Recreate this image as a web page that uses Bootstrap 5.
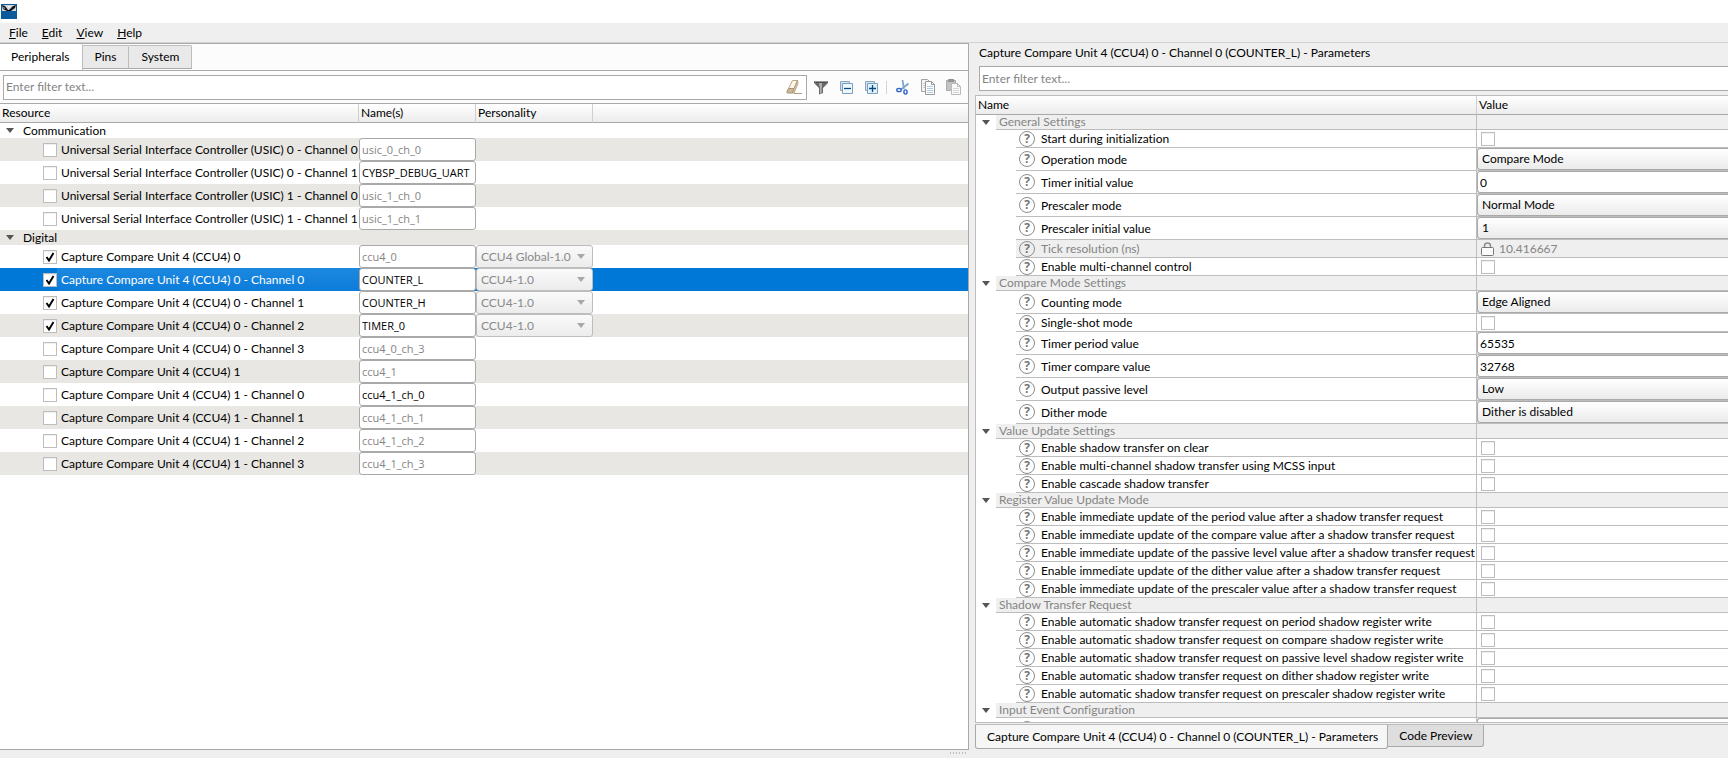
<!DOCTYPE html>
<html lang="en">
<head>
<meta charset="utf-8">
<meta name="viewport" content="width=device-width, initial-scale=1">
<title>Device Configurator</title>
<link href="https://cdn.jsdelivr.net/npm/bootstrap@5.3.0/dist/css/bootstrap.min.css" rel="stylesheet">
<style>
  :root { --line: #bdbdbd; --line-dark: #a9a9a9; --face: #efefef; --stripe: #e8e7e3; --muted: #848484; }
  body { font: 12px/16px Lato, "Open Sans", sans-serif; font-variant-ligatures: none; color: #000; background: var(--face); }
  .title-strip { height: 23px; padding: 3px 1px; }
  .menu-strip { height: 20px; padding: 0 2px; border-bottom: 1px solid #d2d2d2; }
  .menu-strip a { color: #000; text-decoration: none; padding: 0 7px; line-height: 19px; }
  .workspace { display: grid; grid-template-columns: minmax(0, 969fr) minmax(0, 753fr); column-gap: 6px; min-height: 0; }

  .left-pane { border: 1px solid var(--line-dark); border-left: 0; margin-bottom: 8px; }
  .tab-strip { height: 27px; border-bottom: 1px solid var(--line-dark); background: #fcfcfc; }
  .tab-strip button { border: 1px solid var(--line); border-left: 0; border-bottom-color: #aaa; border-radius: 0 2px 0 0; background: #e9e9e9; height: 24px; margin-top: 1px; padding: 0 12px; }
  .tab-strip button.active { height: 26px; margin: 0; padding: 0 12px 0 11px; background: #fff; border-width: 0 1px 0 0; }
  .tool-row { height: 32px; padding: 0 7px 0 3px; background: #fcfcfc; gap: 6px; }
  .tool-icons { gap: 9px; }
  .filter-box { height: 25px; border: 1px solid var(--line-dark); background: #fff; }
  .filter-box input { border: 0; outline: 0; background: transparent; padding: 0 2px; min-width: 0; }
  .filter-box input::placeholder { color: var(--muted); opacity: 1; }
  .icon-btn { border: 0; background: transparent; padding: 0; width: 16px; height: 16px; display: flex; flex: none; }
  .icon-btn svg, .title-strip svg { width: 16px; height: 16px; }
  .tool-sep { width: 1px; height: 13px; margin: 0 -1px 0 -2px; background: #d4d4d4; }

  .tree { table-layout: fixed; width: 100%; border-collapse: separate; border-spacing: 0; }
  .tree td, .tree th { padding: 0; white-space: nowrap; overflow: hidden; font-weight: 400; text-align: left; }
  .tree thead th { height: 19px; line-height: 18px; padding-left: 2px; border-bottom: 1px solid var(--line-dark); border-right: 1px solid #cfcfcf; background: linear-gradient(#fff, #ececec); }
  .tree thead th:last-child { border-right: 0; }
  .cell { display: flex; align-items: center; }
  .caret { width: 0; height: 0; border: 4px solid transparent; border-top: 5px solid #555; border-bottom: 0; flex: none; }
  .tick { appearance: none; width: 14px; height: 14px; margin: 0; flex: none; border: 1px solid var(--line); background: #fff; box-shadow: inset 0 1px #f0f0f0; }
  .tick:checked { background: #fff url("data:image/svg+xml,%3Csvg xmlns='http://www.w3.org/2000/svg' viewBox='0 0 12 12'%3E%3Cpath d='M2.5 6l2.5 3.5L9.500 2' fill='none' stroke='%23000' stroke-width='1.900'/%3E%3C/svg%3E"); }

  .res-head { border-top: 1px solid var(--line-dark); }
  .res .grp .cell { height: 15px; line-height: 15px; padding-left: 6px; gap: 9px; }
  .res .leaf td { height: 23px; }
  .res .leaf .cell { height: 23px; padding-left: 43px; }
  .res .leaf .cell label { flex: 1; padding-left: 4px; line-height: 23px; }
  .res tbody tr:nth-child(even) { background: var(--stripe); }
  .res tbody tr.sel { background: #0078d7; color: #fff; }
  .res tr.sel label { background: linear-gradient(#1d88df, #0c7cda); }
  .edit { display: block; width: 100%; height: 23px; border: 1px solid var(--line-dark); border-radius: 3px; padding: 0 2px; background: #fff; color: #000; }
  .res .edit { font: 11px/16px "Open Sans", sans-serif; }
  .edit.auto { color: var(--muted); }
  .pick { display: block; width: 100%; height: 23px; appearance: none; border: 1px solid var(--line-dark); border-radius: 3px; padding: 0 4px; color: #000; background: linear-gradient(#fff, #ebebeb); opacity: 1; }
  .pick:disabled { color: #8a8a8a; border-color: var(--line); background: url("data:image/svg+xml,%3Csvg xmlns='http://www.w3.org/2000/svg' viewBox='0 0 8 5'%3E%3Cpath d='M0 0h8L4 5z' fill='%23a8a8a8'/%3E%3C/svg%3E") right 7px center / 8px 5px no-repeat, linear-gradient(#fafafa, #ececec); }
  .grip { position: absolute; right: 0; bottom: -5px; width: 18px; height: 2px; background: repeating-linear-gradient(90deg, #bbb 0 1px, transparent 1px 3px); }

  .pane-title { height: 23px; line-height: 20px; padding-left: 4px; }
  .params { border: 1px solid var(--line); border-right: 0; margin-top: 4px; min-height: 0; overflow: hidden; background: #fff; }
  .par thead th { padding-left: 2px; }
  .par tbody td:last-child { border-bottom: 1px solid var(--line); }
  .par tbody td:first-child { border-right: 1px solid var(--line); }
  .par .grp { color: var(--muted); }
  .par .grp .cell { height: 15px; padding-left: 6px; gap: 6px; }
  .par .grp .cell span { flex: 1; padding-left: 3px; height: 15px; line-height: 14px; border-bottom: 1px solid var(--line); background: var(--face); }
  .par .grp td:last-child { background: var(--face); }
  .par .leaf .cell { margin-left: 40px; height: 18px; padding-left: 3px; gap: 6px; border-bottom: 1px solid var(--line); line-height: 17px; }
  .par .tall .cell { height: 23px; }
  .par .locked .cell, .par .locked td:last-child { background: var(--face); color: var(--muted); }
  .par .leaf td:last-child .cell { margin: 0; padding-left: 4px; border: 0; height: 17px; gap: 5px; }
  .par .edit, .par .pick { border-right: 0; border-radius: 3px 0 0 3px; height: 22px; }
  .help { width: 16px; height: 16px; flex: none; border: 1px solid #8c8c8c; border-radius: 50%; color: #777; font: 700 12px/14px "Open Sans", sans-serif; text-align: center; }
  .bottom-tabs { margin: 1px 0 9px; height: 25px; border-top: 1px solid var(--line); }
  .bottom-tabs button { border: 1px solid var(--line-dark); border-top: 0; border-left: 0; border-radius: 0 0 3px 0; background: #dedede; height: 22px; padding: 0 11px; }
  .bottom-tabs button.active { background: #f6f6f6; height: 24px; border-left: 1px solid var(--line-dark); border-radius: 0 0 3px 3px; padding: 0 9px 0 11px; }
</style>
</head>
<body class="vh-100 d-flex flex-column overflow-hidden">
<svg class="d-none" aria-hidden="true">
  <symbol id="i-eraser" viewBox="0 0 16 16"><path d="M6.500 1.500h5L8 9.500H2.500z" fill="#fbf5ec" stroke="#bfa98b"/><path d="M2.500 9.500H8l-1.500 4.500H1.500Q.5 14 1 12.500z" fill="#cbb899" stroke="#ab9474"/><path d="M8 9.500l3.500-8 .5 3L8 14H6.500z" fill="#d8c8b0" stroke="#ab9474" stroke-width=".8"/><path d="M8 14.500h8" stroke="#b39a7a"/></symbol>
  <symbol id="i-funnel" viewBox="0 0 16 16"><path d="M1 2h14v2L10 9v5l-4 1.500V9L1 4z" fill="#6a6a6a"/><path d="M6 4h3l-.5 10-1.500.5V9z" fill="#b4b4b4"/><path d="M1.500 2.500h13" stroke="#999"/><path d="M3 3.500h10" stroke="#4c4c4c"/></symbol>
  <symbol id="i-collapse" viewBox="0 0 16 16"><path d="M2.500 2.500h9v9h-9z" fill="#cfe4f5" stroke="#8ba6c0"/><path d="M4.500 4.500h10v10h-10z" fill="#eef8ff" stroke="#7f9cb8"/><path d="M6 9.500h7" stroke="#0b4a80" stroke-width="1.300"/></symbol>
  <symbol id="i-expand" viewBox="0 0 16 16"><path d="M2.500 2.500h9v9h-9z" fill="#cfe4f5" stroke="#8ba6c0"/><path d="M4.500 4.500h10v10h-10z" fill="#dcf2ff" stroke="#7f9cb8"/><path d="M6 9.500h7M9.500 6v7" stroke="#0b4a80" stroke-width="1.300"/></symbol>
  <symbol id="i-cut" viewBox="0 0 16 16"><path d="M7.500 1l1.500 9M13.500 4.500L6 10.500" stroke="#7ba3cc" stroke-width="1.700" fill="none"/><ellipse cx="4" cy="11" rx="2.200" ry="1.600" fill="none" stroke="#2b62c9" stroke-width="1.400"/><ellipse cx="10.500" cy="13" rx="1.600" ry="2.100" fill="none" stroke="#2b62c9" stroke-width="1.400"/></symbol>
  <symbol id="i-copy" viewBox="0 0 16 16"><path d="M1.500.5h6l3 3v9h-9z" fill="#f6f6f6" stroke="#a2a2a2"/><path d="M3 4.500h3M3 6.500h3M3 8.500h3" stroke="#c5cdd8"/><path d="M5.500 2.500h6l3 3v10h-9z" fill="#fff" stroke="#999"/><path d="M11.500 2.500v3h3" fill="none" stroke="#999"/><path d="M7 7.500h6M7 9.500h6M7 11.500h6M7 13.500h6" stroke="#b5cbe3"/></symbol>
  <symbol id="i-paste" viewBox="0 0 16 16"><path d="M1.500 1.500h9v10h-9z" fill="#c4c4c4" stroke="#ababab"/><path d="M3.500.5h5v2h-5z" fill="#999" stroke="#8f8f8f"/><path d="M6.500 4.500h6l3 3v8h-9z" fill="#fafafa" stroke="#bababa"/><path d="M12.500 4.500v3h3" fill="none" stroke="#bababa"/><path d="M8 9.500h6M8 11.500h6M8 13.500h6" stroke="#d6d6d6"/></symbol>
</svg>

<header>
  <div class="title-strip bg-white d-flex">
    <svg viewBox="0 0 16 16" role="img" aria-label="Application"><path d="M0 1h16v15H0z" fill="#0a5a9c"/><path d="M1 2h14v6H1z" fill="#cfd8df"/><path d="M1 2l3 1 3 4h1l4-4 3-1-1 3-4 3H6L2 6z" fill="#111"/><path d="M2 4l2 1-1 1zM7 3h2L8 5z" fill="#fff"/></svg>
  </div>
  <nav class="menu-strip d-flex" aria-label="Main menu">
    <a href="#"><u>F</u>ile</a><a href="#"><u>E</u>dit</a><a href="#"><u>V</u>iew</a><a href="#"><u>H</u>elp</a>
  </nav>
</header>

<main class="workspace flex-grow-1">
  <section class="left-pane bg-white position-relative">
    <div class="tab-strip d-flex" role="tablist">
      <button type="button" role="tab" class="active">Peripherals</button><button type="button" role="tab">Pins</button><button type="button" role="tab">System</button>
    </div>
    <div class="tool-row d-flex align-items-center">
      <div class="filter-box d-flex align-items-center flex-grow-1 pe-1">
        <input type="text" class="flex-grow-1" placeholder="Enter filter text..." aria-label="Filter resources">
        <button type="button" class="icon-btn" aria-label="Clear"><svg><use href="#i-eraser"/></svg></button>
      </div>
      <div class="tool-icons d-flex align-items-center">
        <button type="button" class="icon-btn" aria-label="Filter"><svg><use href="#i-funnel"/></svg></button>
        <button type="button" class="icon-btn" aria-label="Collapse all"><svg><use href="#i-collapse"/></svg></button>
        <button type="button" class="icon-btn" aria-label="Expand all"><svg><use href="#i-expand"/></svg></button>
        <span class="tool-sep"></span>
        <button type="button" class="icon-btn" aria-label="Cut"><svg><use href="#i-cut"/></svg></button>
        <button type="button" class="icon-btn" aria-label="Copy"><svg><use href="#i-copy"/></svg></button>
        <button type="button" class="icon-btn" aria-label="Paste"><svg><use href="#i-paste"/></svg></button>
      </div>
    </div>
    <div class="res-head">
    <table class="tree res">
      <colgroup><col style="width:359px"><col style="width:117px"><col style="width:117px"><col></colgroup>
      <thead><tr><th>Resource</th><th>Name(s)</th><th>Personality</th><th></th></tr></thead>
      <tbody>
        <tr class="grp"><td colspan="4"><div class="cell"><i class="caret"></i>Communication</div></td></tr>
        <tr class="leaf"><td><div class="cell"><input type="checkbox" class="tick" id="r1"><label for="r1">Universal Serial Interface Controller (USIC) 0 - Channel 0</label></div></td><td><input class="edit auto" value="usic_0_ch_0" aria-label="Name"></td><td></td><td></td></tr>
        <tr class="leaf"><td><div class="cell"><input type="checkbox" class="tick" id="r2"><label for="r2">Universal Serial Interface Controller (USIC) 0 - Channel 1</label></div></td><td><input class="edit" value="CYBSP_DEBUG_UART" aria-label="Name"></td><td></td><td></td></tr>
        <tr class="leaf"><td><div class="cell"><input type="checkbox" class="tick" id="r3"><label for="r3">Universal Serial Interface Controller (USIC) 1 - Channel 0</label></div></td><td><input class="edit auto" value="usic_1_ch_0" aria-label="Name"></td><td></td><td></td></tr>
        <tr class="leaf"><td><div class="cell"><input type="checkbox" class="tick" id="r4"><label for="r4">Universal Serial Interface Controller (USIC) 1 - Channel 1</label></div></td><td><input class="edit auto" value="usic_1_ch_1" aria-label="Name"></td><td></td><td></td></tr>
        <tr class="grp"><td colspan="4"><div class="cell"><i class="caret"></i>Digital</div></td></tr>
        <tr class="leaf"><td><div class="cell"><input type="checkbox" class="tick" id="r5" checked><label for="r5">Capture Compare Unit 4 (CCU4) 0</label></div></td><td><input class="edit auto" value="ccu4_0" aria-label="Name"></td><td><select class="pick" disabled aria-label="Personality"><option>CCU4 Global-1.0</option></select></td><td></td></tr>
        <tr class="leaf sel"><td><div class="cell"><input type="checkbox" class="tick" id="r6" checked><label for="r6">Capture Compare Unit 4 (CCU4) 0 - Channel 0</label></div></td><td><input class="edit" value="COUNTER_L" aria-label="Name"></td><td><select class="pick" disabled aria-label="Personality"><option>CCU4-1.0</option></select></td><td></td></tr>
        <tr class="leaf"><td><div class="cell"><input type="checkbox" class="tick" id="r7" checked><label for="r7">Capture Compare Unit 4 (CCU4) 0 - Channel 1</label></div></td><td><input class="edit" value="COUNTER_H" aria-label="Name"></td><td><select class="pick" disabled aria-label="Personality"><option>CCU4-1.0</option></select></td><td></td></tr>
        <tr class="leaf"><td><div class="cell"><input type="checkbox" class="tick" id="r8" checked><label for="r8">Capture Compare Unit 4 (CCU4) 0 - Channel 2</label></div></td><td><input class="edit" value="TIMER_0" aria-label="Name"></td><td><select class="pick" disabled aria-label="Personality"><option>CCU4-1.0</option></select></td><td></td></tr>
        <tr class="leaf"><td><div class="cell"><input type="checkbox" class="tick" id="r9"><label for="r9">Capture Compare Unit 4 (CCU4) 0 - Channel 3</label></div></td><td><input class="edit auto" value="ccu4_0_ch_3" aria-label="Name"></td><td></td><td></td></tr>
        <tr class="leaf"><td><div class="cell"><input type="checkbox" class="tick" id="r10"><label for="r10">Capture Compare Unit 4 (CCU4) 1</label></div></td><td><input class="edit auto" value="ccu4_1" aria-label="Name"></td><td></td><td></td></tr>
        <tr class="leaf"><td><div class="cell"><input type="checkbox" class="tick" id="r11"><label for="r11">Capture Compare Unit 4 (CCU4) 1 - Channel 0</label></div></td><td><input class="edit" value="ccu4_1_ch_0" aria-label="Name"></td><td></td><td></td></tr>
        <tr class="leaf"><td><div class="cell"><input type="checkbox" class="tick" id="r12"><label for="r12">Capture Compare Unit 4 (CCU4) 1 - Channel 1</label></div></td><td><input class="edit auto" value="ccu4_1_ch_1" aria-label="Name"></td><td></td><td></td></tr>
        <tr class="leaf"><td><div class="cell"><input type="checkbox" class="tick" id="r13"><label for="r13">Capture Compare Unit 4 (CCU4) 1 - Channel 2</label></div></td><td><input class="edit auto" value="ccu4_1_ch_2" aria-label="Name"></td><td></td><td></td></tr>
        <tr class="leaf"><td><div class="cell"><input type="checkbox" class="tick" id="r14"><label for="r14">Capture Compare Unit 4 (CCU4) 1 - Channel 3</label></div></td><td><input class="edit auto" value="ccu4_1_ch_3" aria-label="Name"></td><td></td><td></td></tr>
      </tbody>
    </table>
    </div>
    <span class="grip"></span>
  </section>

  <section class="d-flex flex-column overflow-hidden">
    <div class="pane-title flex-shrink-0">Capture Compare Unit 4 (CCU4) 0 - Channel 0 (COUNTER_L) - Parameters</div>
    <div class="filter-box d-flex ms-1 border-end-0 flex-shrink-0">
      <input type="text" class="flex-grow-1" placeholder="Enter filter text..." aria-label="Filter parameters">
    </div>
    <div class="params flex-fill">
    <table class="tree par">
      <colgroup><col style="width:501px"><col></colgroup>
      <thead><tr><th>Name</th><th>Value</th></tr></thead>
      <tbody>
        <tr class="grp"><td><div class="cell"><i class="caret"></i><span>General Settings</span></div></td><td></td></tr>
        <tr class="leaf"><td><div class="cell"><b class="help">?</b><label for="p1">Start during initialization</label></div></td><td><div class="cell"><input type="checkbox" class="tick" id="p1"></div></td></tr>
        <tr class="leaf tall"><td><div class="cell"><b class="help">?</b><label for="p2">Operation mode</label></div></td><td><select class="pick" id="p2"><option>Compare Mode</option></select></td></tr>
        <tr class="leaf tall"><td><div class="cell"><b class="help">?</b><label for="p3">Timer initial value</label></div></td><td><input class="edit" id="p3" value="0"></td></tr>
        <tr class="leaf tall"><td><div class="cell"><b class="help">?</b><label for="p4">Prescaler mode</label></div></td><td><select class="pick" id="p4"><option>Normal Mode</option></select></td></tr>
        <tr class="leaf tall"><td><div class="cell"><b class="help">?</b><label for="p5">Prescaler initial value</label></div></td><td><select class="pick" id="p5"><option>1</option></select></td></tr>
        <tr class="leaf locked"><td><div class="cell"><b class="help">?</b><span>Tick resolution (ns)</span></div></td><td><div class="cell"><svg width="13" height="14" viewBox="0 0 13 14" aria-hidden="true"><path d="M3.500 6V4q0-3 3-3t3 3v2" fill="none" stroke="#8d8d8d" stroke-width="1.500"/><rect x=".5" y="5.500" width="12" height="8" rx="1" fill="#fafafa" stroke="#777"/></svg>10.416667</div></td></tr>
        <tr class="leaf"><td><div class="cell"><b class="help">?</b><label for="p6">Enable multi-channel control</label></div></td><td><div class="cell"><input type="checkbox" class="tick" id="p6"></div></td></tr>
        <tr class="grp"><td><div class="cell"><i class="caret"></i><span>Compare Mode Settings</span></div></td><td></td></tr>
        <tr class="leaf tall"><td><div class="cell"><b class="help">?</b><label for="p7">Counting mode</label></div></td><td><select class="pick" id="p7"><option>Edge Aligned</option></select></td></tr>
        <tr class="leaf"><td><div class="cell"><b class="help">?</b><label for="p8">Single-shot mode</label></div></td><td><div class="cell"><input type="checkbox" class="tick" id="p8"></div></td></tr>
        <tr class="leaf tall"><td><div class="cell"><b class="help">?</b><label for="p9">Timer period value</label></div></td><td><input class="edit" id="p9" value="65535"></td></tr>
        <tr class="leaf tall"><td><div class="cell"><b class="help">?</b><label for="p10">Timer compare value</label></div></td><td><input class="edit" id="p10" value="32768"></td></tr>
        <tr class="leaf tall"><td><div class="cell"><b class="help">?</b><label for="p11">Output passive level</label></div></td><td><select class="pick" id="p11"><option>Low</option></select></td></tr>
        <tr class="leaf tall"><td><div class="cell"><b class="help">?</b><label for="p12">Dither mode</label></div></td><td><select class="pick" id="p12"><option>Dither is disabled</option></select></td></tr>
        <tr class="grp"><td><div class="cell"><i class="caret"></i><span>Value Update Settings</span></div></td><td></td></tr>
        <tr class="leaf"><td><div class="cell"><b class="help">?</b><label for="p13">Enable shadow transfer on clear</label></div></td><td><div class="cell"><input type="checkbox" class="tick" id="p13"></div></td></tr>
        <tr class="leaf"><td><div class="cell"><b class="help">?</b><label for="p14">Enable multi-channel shadow transfer using MCSS input</label></div></td><td><div class="cell"><input type="checkbox" class="tick" id="p14"></div></td></tr>
        <tr class="leaf"><td><div class="cell"><b class="help">?</b><label for="p15">Enable cascade shadow transfer</label></div></td><td><div class="cell"><input type="checkbox" class="tick" id="p15"></div></td></tr>
        <tr class="grp"><td><div class="cell"><i class="caret"></i><span>Register Value Update Mode</span></div></td><td></td></tr>
        <tr class="leaf"><td><div class="cell"><b class="help">?</b><label for="p16">Enable immediate update of the period value after a shadow transfer request</label></div></td><td><div class="cell"><input type="checkbox" class="tick" id="p16"></div></td></tr>
        <tr class="leaf"><td><div class="cell"><b class="help">?</b><label for="p17">Enable immediate update of the compare value after a shadow transfer request</label></div></td><td><div class="cell"><input type="checkbox" class="tick" id="p17"></div></td></tr>
        <tr class="leaf"><td><div class="cell"><b class="help">?</b><label for="p18">Enable immediate update of the passive level value after a shadow transfer request</label></div></td><td><div class="cell"><input type="checkbox" class="tick" id="p18"></div></td></tr>
        <tr class="leaf"><td><div class="cell"><b class="help">?</b><label for="p19">Enable immediate update of the dither value after a shadow transfer request</label></div></td><td><div class="cell"><input type="checkbox" class="tick" id="p19"></div></td></tr>
        <tr class="leaf"><td><div class="cell"><b class="help">?</b><label for="p20">Enable immediate update of the prescaler value after a shadow transfer request</label></div></td><td><div class="cell"><input type="checkbox" class="tick" id="p20"></div></td></tr>
        <tr class="grp"><td><div class="cell"><i class="caret"></i><span>Shadow Transfer Request</span></div></td><td></td></tr>
        <tr class="leaf"><td><div class="cell"><b class="help">?</b><label for="p21">Enable automatic shadow transfer request on period shadow register write</label></div></td><td><div class="cell"><input type="checkbox" class="tick" id="p21"></div></td></tr>
        <tr class="leaf"><td><div class="cell"><b class="help">?</b><label for="p22">Enable automatic shadow transfer request on compare shadow register write</label></div></td><td><div class="cell"><input type="checkbox" class="tick" id="p22"></div></td></tr>
        <tr class="leaf"><td><div class="cell"><b class="help">?</b><label for="p23">Enable automatic shadow transfer request on passive level shadow register write</label></div></td><td><div class="cell"><input type="checkbox" class="tick" id="p23"></div></td></tr>
        <tr class="leaf"><td><div class="cell"><b class="help">?</b><label for="p24">Enable automatic shadow transfer request on dither shadow register write</label></div></td><td><div class="cell"><input type="checkbox" class="tick" id="p24"></div></td></tr>
        <tr class="leaf"><td><div class="cell"><b class="help">?</b><label for="p25">Enable automatic shadow transfer request on prescaler shadow register write</label></div></td><td><div class="cell"><input type="checkbox" class="tick" id="p25"></div></td></tr>
        <tr class="grp"><td><div class="cell"><i class="caret"></i><span>Input Event Configuration</span></div></td><td></td></tr>
        <tr class="leaf tall"><td><div class="cell"><b class="help"></b></div></td><td><select class="pick" aria-label="Event"></select></td></tr>
      </tbody>
    </table>
    </div>
    <div class="bottom-tabs d-flex flex-shrink-0" role="tablist">
      <button type="button" role="tab" class="active">Capture Compare Unit 4 (CCU4) 0 - Channel 0 (COUNTER_L) - Parameters</button><button type="button" role="tab">Code Preview</button>
    </div>
  </section>
</main>
<script src="https://cdn.jsdelivr.net/npm/bootstrap@5.3.0/dist/js/bootstrap.bundle.min.js"></script>
</body>
</html>
